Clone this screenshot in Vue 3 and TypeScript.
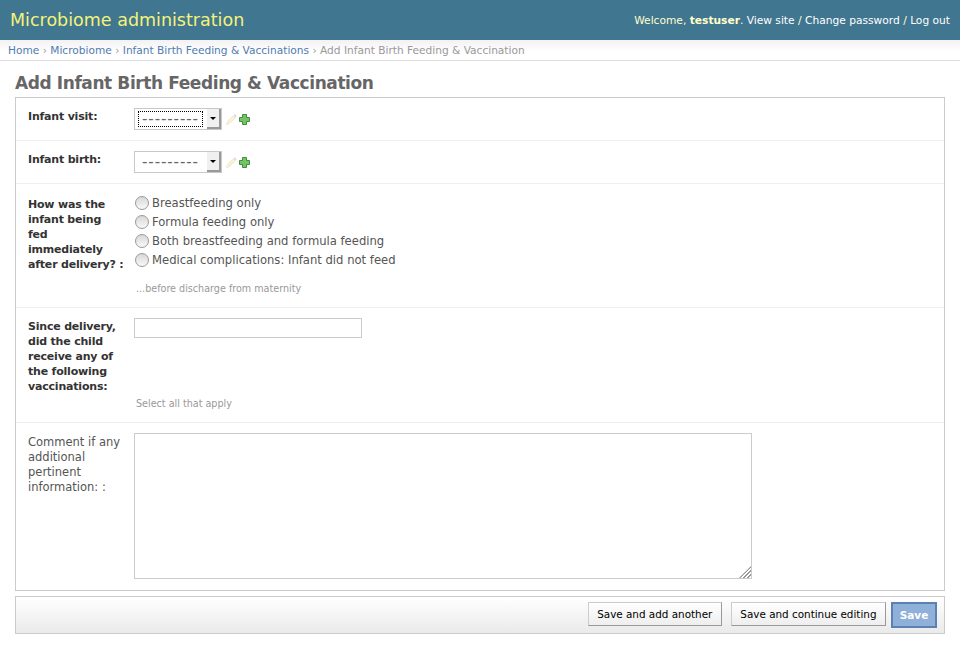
<script setup lang="ts">
const feedOptions = [
  'Breastfeeding only',
  'Formula feeding only',
  'Both breastfeeding and formula feeding',
  'Medical complications: Infant did not feed',
];
const selects = [
  { label: 'Infant visit:', focused: true },
  { label: 'Infant birth:', focused: false },
];
</script>

<template>
  <div class="page">
    <header class="topbar">
      <div class="brand">Microbiome administration</div>
      <div class="tools">
        Welcome, <strong>testuser</strong>.
        <a>View site</a> / <a>Change password</a> / <a>Log out</a>
      </div>
    </header>

    <div class="crumbs">
      <a>Home</a> › <a>Microbiome</a> › <a>Infant Birth Feeding &amp; Vaccinations</a> › Add Infant Birth Feeding &amp; Vaccination
    </div>

    <main class="content">
      <h1>Add Infant Birth Feeding &amp; Vaccination</h1>

      <div class="fieldset">
        <div v-for="s in selects" :key="s.label" class="row row-select">
          <label class="req">{{ s.label }}</label>
          <div class="widget">
            <div class="select">
              <span class="select-value" :class="{ focused: s.focused }">---------</span>
              <span class="select-btn"><i class="caret"></i></span>
            </div>
            <svg class="icon" width="11" height="11" viewBox="0 0 11 11">
              <path d="M.5 10.5 L1.5 7.5 L7 2 L9 4 L3.5 9.5 Z" fill="#faf3d0" stroke="#e8e0c4" stroke-width="0.7" />
              <path d="M7.5 1.5 L8.8 .3 L10.7 2.2 L9.5 3.5 Z" fill="#f6c6e6" />
            </svg>
            <svg class="icon plus" width="11" height="11" viewBox="0 0 11 11">
              <path d="M3.5 .5 H7.5 V3.5 H10.5 V7.5 H7.5 V10.5 H3.5 V7.5 H.5 V3.5 H3.5 Z" fill="#74c365" stroke="#3f8f3f" />
            </svg>
          </div>
        </div>

        <div class="row row-radio">
          <label class="req">How was the infant being fed immediately after delivery? :</label>
          <div class="widget-col">
            <ul class="radios">
              <li v-for="o in feedOptions" :key="o">
                <span class="radio"></span>{{ o }}
              </li>
            </ul>
            <p class="help">...before discharge from maternity</p>
          </div>
        </div>

        <div class="row row-text">
          <label class="req">Since delivery, did the child receive any of the following vaccinations:</label>
          <div class="widget-col">
            <input class="text" type="text" />
            <p class="help help-text">Select all that apply</p>
          </div>
        </div>

        <div class="row row-last">
          <label>Comment if any additional pertinent information: :</label>
          <div class="area-wrap">
            <textarea class="area"></textarea>
            <span class="grip"></span>
          </div>
        </div>
      </div>

      <div class="submit-row">
        <button class="btn btn-add">Save and add another</button>
        <button class="btn btn-cont">Save and continue editing</button>
        <button class="btn-save">Save</button>
      </div>
    </main>
  </div>
</template>

<style>
html, body { background: #fff; }
</style>

<style scoped>
.page {
  font-family: "DejaVu Sans", Verdana, sans-serif;
  font-size: 11px;
  color: #333;
  height: 669px;
  overflow: hidden;
}

/* Header */
.topbar {
  height: 40px;
  background: #417690;
  display: flex;
  align-items: center;
  justify-content: space-between;
  padding: 0 10px;
  box-sizing: border-box;
}
.brand { font-size: 17.5px; color: #f4f379; }
.tools { color: #ffc; font-size: 10.67px; }
.tools strong { font-weight: bold; }
.tools a { color: #fff; }

.crumbs {
  height: 20px;
  line-height: 20px;
  padding: 0 8px;
  font-size: 10.6px;
  color: #999;
  background: linear-gradient(#f2f2f2, #fff 60%);
  border-bottom: 1px solid #ddd;
  white-space: nowrap;
}
.crumbs a { color: #4f7bb0; }

/* Content */
.content { padding: 0 15px; }
h1 {
  margin: 0;
  height: 36px;
  line-height: 44px;
  font-size: 17px;
  letter-spacing: -0.41px;
  font-weight: bold;
  color: #666;
  white-space: nowrap;
}

.fieldset { border: 1px solid #ccc; }
.row {
  display: flex;
  padding: 0 12px;
  border-bottom: 1px solid #eee;
  box-sizing: border-box;
}
.row label {
  width: 96px;
  margin-right: 10px;
  flex: none;
  line-height: 15px;
  font-size: 11.5px;
  color: #333;
  padding-top: 12px;
}
.row label.req {
  font-weight: bold;
  font-size: 11px;
  letter-spacing: -0.2px;
  padding-top: 11px;
}
.row-select { height: 43px; }
.row-radio { height: 124px; }
.row-radio label.req { padding-top: 13px; }
.row-text { height: 115px; }
.row-last { height: 167px; border-bottom: 0; }
.row-last label { color: #555; font-weight: normal; }

.widget { display: flex; align-items: flex-start; padding-top: 10px; }
.select {
  width: 88px;
  height: 22px;
  box-sizing: border-box;
  border: 1px solid #c8c8c8;
  display: flex;
  background: #fff;
}
.select-value {
  flex: 1;
  margin: 2px 4px 2px 3px;
  padding-left: 3px;
  font-size: 15px;
  line-height: 14px;
  letter-spacing: 0.9px;
  color: #666;
  border: 1px dotted transparent;
  white-space: nowrap;
  overflow: hidden;
}
.select-value.focused { border-color: #000; }
.select-btn {
  width: 12px;
  background: #f0f0f0;
  border-right: 2px solid #999;
  border-bottom: 2px solid #999;
  display: flex;
  align-items: center;
  justify-content: center;
}
.caret {
  border: 3px solid transparent;
  border-top-color: #000;
  border-bottom: 0;
}
.icon { margin: 6px 0 0 4px; flex: none; }
.plus { margin: 6px 0 0 2px; }

.widget-col { display: flex; flex-direction: column; }
.radios {
  list-style: none;
  margin: 0;
  padding: 9px 0 0;
}
.radios li {
  display: flex;
  align-items: center;
  height: 19px;
  font-size: 11.6px;
  color: #555;
  white-space: nowrap;
}
.radio {
  width: 12px;
  height: 12px;
  margin: 1px 3px 0 1px;
  border: 1px solid #999;
  border-radius: 50%;
  background: linear-gradient(#d8d8d8, #f8f8f8);
  flex: none;
}
.help {
  margin: 13px 0 0 2px;
  font-size: 9.6px;
  line-height: 14px;
  color: #999;
}
.help-text { margin-top: 59px; }

.text {
  width: 228px;
  height: 20px;
  margin: 10px 0 0;
  padding: 0 3px;
  box-sizing: border-box;
  border: 1px solid #ccc;
  outline: none;
}
.area-wrap {
  position: relative;
  width: 618px;
  height: 146px;
  margin-top: 10px;
}
.area {
  display: block;
  width: 100%;
  height: 100%;
  margin: 0;
  padding: 2px;
  box-sizing: border-box;
  border: 1px solid #ccc;
  background: #fff;
  outline: none;
  resize: none;
}
.grip {
  position: absolute;
  right: 1px;
  bottom: 1px;
  width: 12px;
  height: 12px;
  clip-path: polygon(100% 0, 100% 100%, 0 100%);
  background: repeating-linear-gradient(135deg, #999 0 1.4px, #fff 1.4px 2.8px);
}

/* Submit row */
.submit-row {
  margin-top: 5px;
  height: 38px;
  box-sizing: border-box;
  border: 1px solid #ccc;
  background: linear-gradient(#fff, #eaeaea);
  display: flex;
  align-items: flex-start;
  justify-content: flex-end;
  padding: 5px 7px 0 0;
}
.btn {
  height: 24px;
  padding: 0 8.5px;
  font: 10.4px "DejaVu Sans", Verdana, sans-serif;
  color: #000;
  background: linear-gradient(#fff, #eee);
  border: 1px solid #ccc;
  border-right-color: #999;
  border-bottom-color: #999;
  cursor: pointer;
}
.btn-add { margin-right: 9px; }
.btn-cont { margin-right: 5px; }
.btn-save {
  height: 26px;
  width: 46px;
  font: bold 10.5px "DejaVu Sans", Verdana, sans-serif;
  color: #fff;
  background: #8fb0d8;
  border: 2px solid #5b80b2;
  cursor: pointer;
}
</style>
